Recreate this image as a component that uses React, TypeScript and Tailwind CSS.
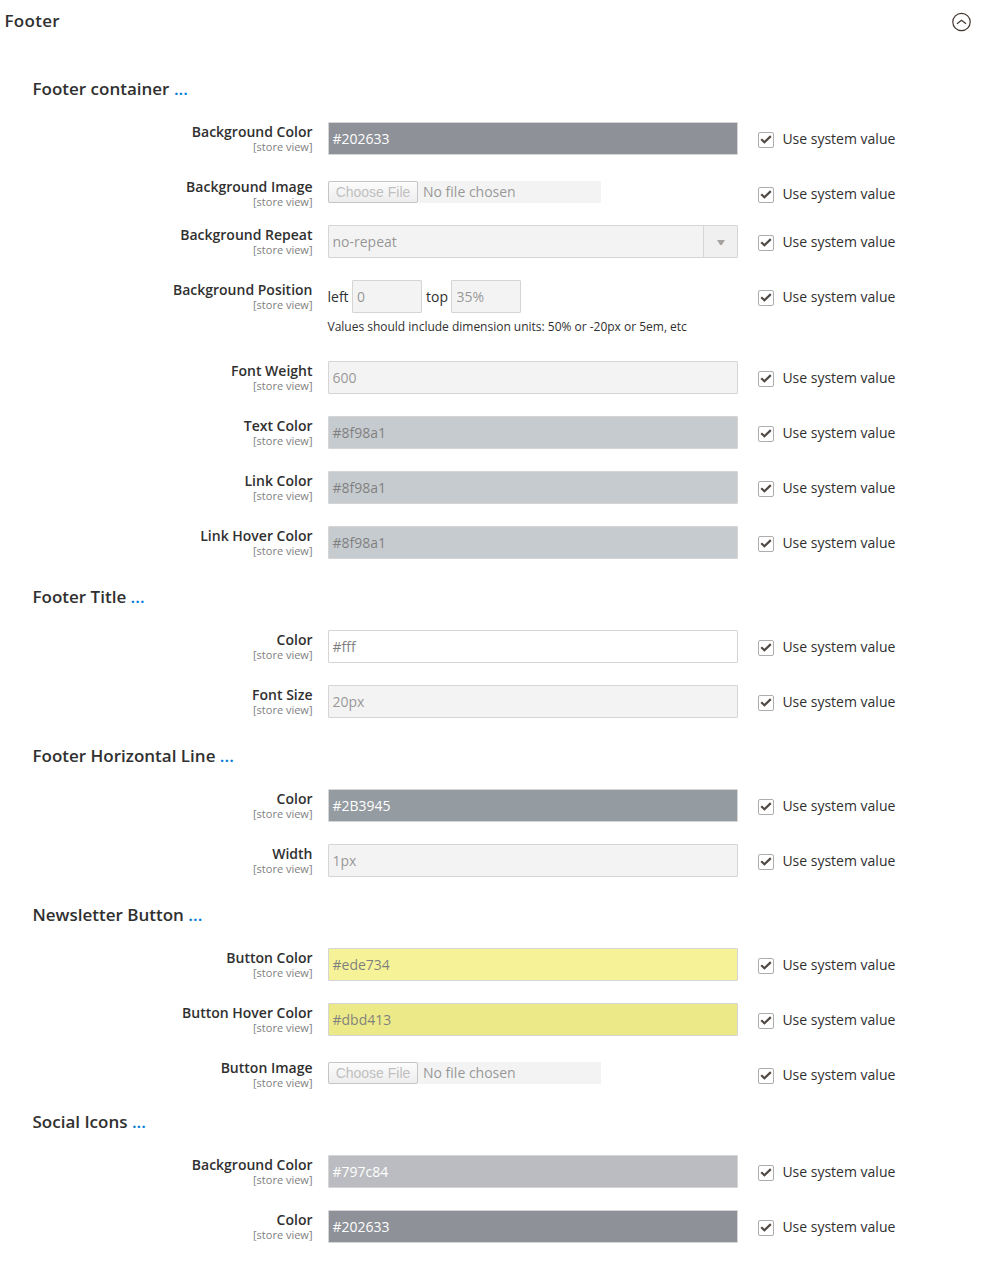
import React from "react";

type Field = {
  label: string;
  kind?: "text" | "file" | "select" | "position";
  value?: string;
  tone?: string;
};

const plain = "bg-[#e9e9e9] text-[#303030]";

const groups: { title: string; fields: Field[] }[] = [
  {
    title: "Footer container",
    fields: [
      { label: "Background Color", value: "#202633", tone: "bg-[#202633] text-white" },
      { label: "Background Image", kind: "file" },
      { label: "Background Repeat", kind: "select", value: "no-repeat" },
      { label: "Background Position", kind: "position" },
      { label: "Font Weight", value: "600" },
      { label: "Text Color", value: "#8f98a1", tone: "bg-[#8f98a1] text-black" },
      { label: "Link Color", value: "#8f98a1", tone: "bg-[#8f98a1] text-black" },
      { label: "Link Hover Color", value: "#8f98a1", tone: "bg-[#8f98a1] text-black" },
    ],
  },
  {
    title: "Footer Title",
    fields: [
      { label: "Color", value: "#fff", tone: "bg-white text-black" },
      { label: "Font Size", value: "20px" },
    ],
  },
  {
    title: "Footer Horizontal Line",
    fields: [
      { label: "Color", value: "#2B3945", tone: "bg-[#2B3945] text-white" },
      { label: "Width", value: "1px" },
    ],
  },
  {
    title: "Newsletter Button",
    fields: [
      { label: "Button Color", value: "#ede734", tone: "bg-[#ede734] text-black" },
      { label: "Button Hover Color", value: "#dbd413", tone: "bg-[#dbd413] text-black" },
      { label: "Button Image", kind: "file" },
    ],
  },
  {
    title: "Social Icons",
    fields: [
      { label: "Background Color", value: "#797c84", tone: "bg-[#797c84] text-white" },
      { label: "Color", value: "#202633", tone: "bg-[#202633] text-white" },
    ],
  },
];

function Box({ value, tone = plain, size = "w-[410px] pl-[3.5px]" }: { value?: string; tone?: string; size?: string }) {
  return (
    <div className={`flex h-[33px] items-center rounded-[1px] border border-[#adadad] pb-px opacity-50 ${size} ${tone}`}>
      {value}
    </div>
  );
}

function Control({ field }: { field: Field }) {
  if (field.kind === "file") {
    return (
      <div className="mt-1 flex h-[22px] w-[273px] items-center bg-[#e9e9e9] opacity-50">
        <span className="flex h-[22px] w-[90px] items-center justify-center rounded-[2px] border border-[#8c8c8c] bg-linear-to-b from-[#fbfbfb] to-[#dddddd] font-['Liberation_Sans',sans-serif] text-[14px] text-[#808080]">
          Choose File
        </span>
        <span className="pb-[2px] pl-[5px] text-[#303030]">No file chosen</span>
      </div>
    );
  }
  if (field.kind === "select") {
    return (
      <div className="flex h-[33px] w-[410px] rounded-[1px] border border-[#adadad] bg-[#e9e9e9] text-[#303030] opacity-50">
        <span className="flex flex-1 items-center pb-px pl-[3.5px]">{field.value}</span>
        <span className="flex w-[34px] items-center justify-center border-l border-[#adadad] bg-[#e3e3e3] pt-px pl-px">
          <svg width="8" height="5" viewBox="0 0 8 5">
            <path d="M0 0h8L4.8 5H3.2z" fill="#514943" />
          </svg>
        </span>
      </div>
    );
  }
  if (field.kind === "position") {
    return (
      <div>
        <div className="flex h-[33px] items-center">
          <span className="-ml-[0.5px] w-[24.5px] pb-px">left</span>
          <Box value="0" size="w-[70px] pl-1" />
          <span className="w-[29px] pb-px pl-1">top</span>
          <Box value="35%" size="w-[70px] pl-[4.5px]" />
        </div>
        <p className="mt-[5px] -ml-[0.5px] text-[12px] leading-[17px] tracking-[-0.01px] whitespace-nowrap">
          Values should include dimension units: 50% or -20px or 5em, etc
        </p>
      </div>
    );
  }
  return <Box value={field.value} tone={field.tone} />;
}

function Row({ field }: { field: Field }) {
  const height =
    field.kind === "file" ? "h-12" : field.kind === "position" ? "h-[81px]" : "h-[55px]";
  return (
    <div className={`flex items-start ${height}`}>
      <div className="w-[313px] shrink-0 pr-[0.5px] text-right">
        <div className="text-[14px] leading-[19px] font-semibold">{field.label}</div>
        <div className="text-[11px] leading-3 text-[#808080]">[store view]</div>
      </div>
      <div className="ml-[15px] w-[430px] shrink-0">
        <Control field={field} />
      </div>
      <div className="flex h-[33px] items-center">
        <span className="mt-[3px] flex size-4 items-center justify-center rounded-[2px] border border-[#adadad] bg-white">
          <svg width="12" height="10" viewBox="0 0 12 10" fill="none">
            <path d="M1.2 4.3 4.4 7.2 10.8 1.1" stroke="#514943" strokeWidth="2.2" />
          </svg>
        </span>
        <span className="pb-px pl-[8.4px]">Use system value</span>
      </div>
    </div>
  );
}

export default function App() {
  return (
    <main className="h-[1263px] w-[988px] overflow-hidden bg-white font-['Open_Sans',sans-serif] text-[14px] leading-[19px] text-[#303030]">
      <header className="flex h-[73px] items-start justify-between pr-[17px] pl-[4.5px]">
        <h1 className="mt-[9px] text-[17px] leading-6 font-semibold tracking-[0.3px]">Footer</h1>
        <svg className="mt-3 shrink-0" width="20" height="20" viewBox="0 0 20 20" fill="none" stroke="#41362f">
          <circle cx="10.5" cy="10" r="8.7" strokeWidth="1.2" />
          <path d="M6 11.7 10.5 8.2l4.5 3.5" strokeWidth="1.2" />
        </svg>
      </header>
      {groups.map((group) => (
        <section key={group.title}>
          <h2 className="h-[49px] pt-1 pl-[32.5px] text-[17px] leading-6 font-semibold">
            {group.title} <span className="text-[#007bdb]">...</span>
          </h2>
          {group.fields.map((field) => (
            <Row key={field.label} field={field} />
          ))}
        </section>
      ))}
    </main>
  );
}
